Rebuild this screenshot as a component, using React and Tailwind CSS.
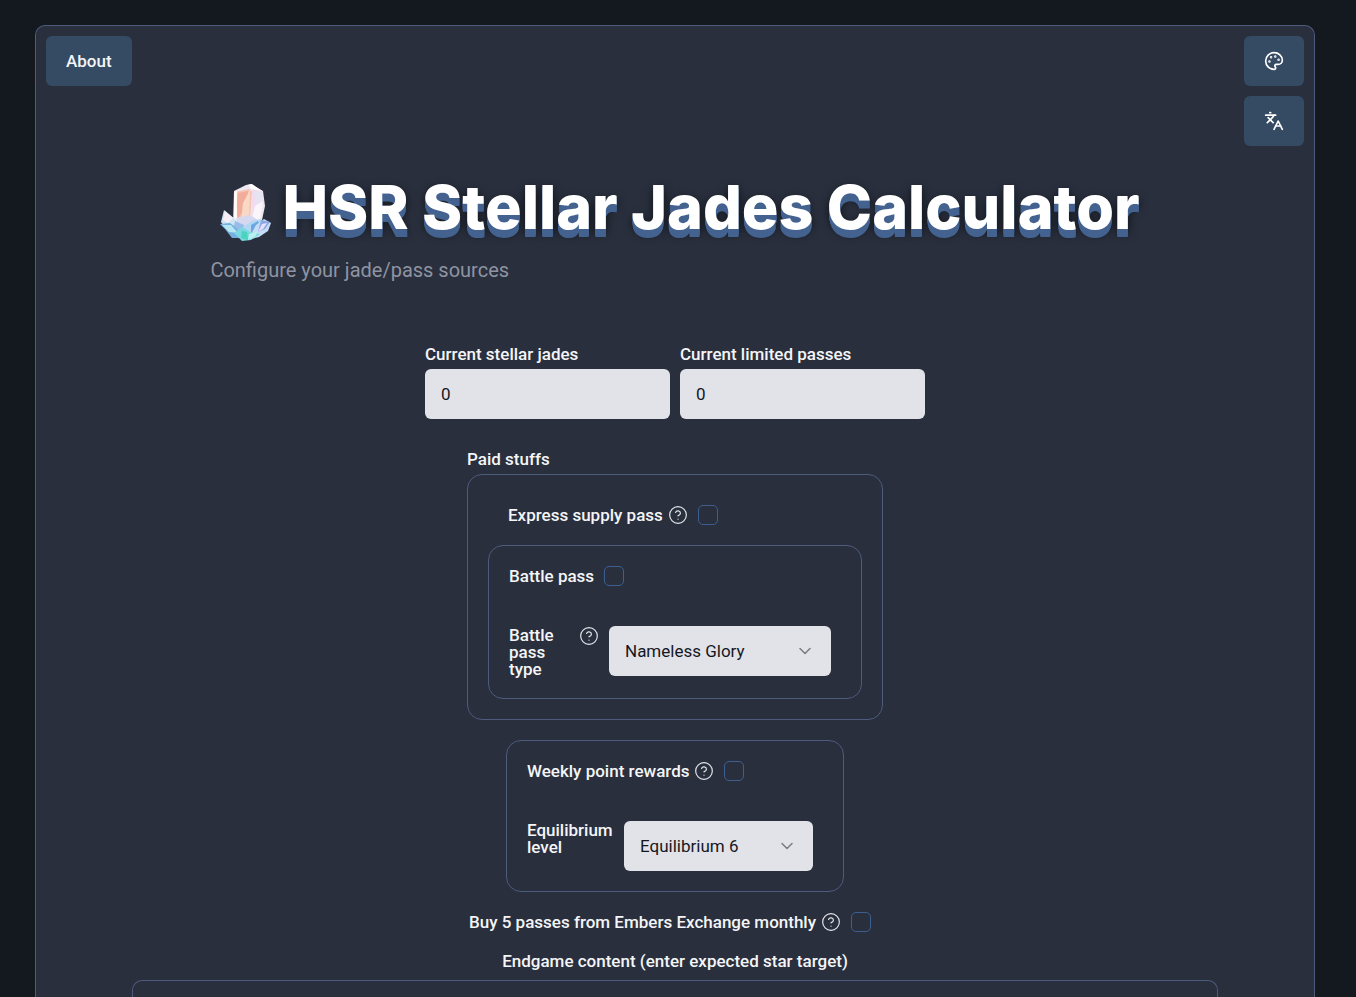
import { useState } from "react";
import { CircleHelp, ChevronDown, Languages, Palette } from "lucide-react";

function Crystal() {
  return (
    <svg viewBox="0 0 52 60" className="h-[60px] w-[52px] shrink-0" aria-hidden="true">
      <path d="M13 41 14 9l12-6 5-1 12 7 2 15-3 14-2 10-14 6z" fill="#eee8f2" />
      <path d="M15 10 29 7l3 3-2 28-13 1z" fill="#f6c4b2" />
      <path d="M18 11l10-2-1 14-9 14-2-8z" fill="#f1ad99" />
      <path d="M30 8l-1 25-8 6 2-18z" fill="#f9d9c6" />
      <path d="M32 8l9 0 3 12-9 8-4 8z" fill="#f0dcef" />
      <path d="M32 7l-4-4 4-1 10 7z" fill="#fff" />
      <path d="M34 10l8-1 1 9-7 5z" fill="#e6e4f2" />
      <path d="M14 11l3-3v30l-3 2z" fill="#fffaf5" />
      <path d="M35 24l8-5-3 18-9 4z" fill="#fbf5fa" />
      <path d="M16 36l14-3 8 5-2 9-17 2z" fill="#d5d8ef" />
      <path d="M1 40 4 28l11 9 9 11-6 8-9-5z" fill="#cde5f3" />
      <path d="M3 38l2-9 8 7-5 5z" fill="#f7eff5" />
      <path d="M0 42l10-1 7 5 6 10-11 0-7-9z" fill="#75afe0" />
      <path d="M2 43l9 0 7 8-9-1z" fill="#b6e6f2" />
      <path d="M15 39l9 4-1 9-9-8z" fill="#97bce7" />
      <path d="M23 45l9-6 9-2 2 7-8 10-11 4z" fill="#b2d7f2" />
      <path d="M31 43l7-4 2 5-9 7z" fill="#6ca6e0" />
      <path d="M36 43l8-6 7 4-3 8-9 6-11 3z" fill="#c7ddf7" />
      <path d="M41 38l9 2-5 7-7 3z" fill="#8aa9e4" />
      <path d="M42 42l5-1-4 6-5 3z" fill="#e8e0fb" />
      <path d="M14 51l8-6 8 5 10 2-9 6-9 1z" fill="#79d8e0" />
      <path d="M22 49l5 1 1 8-7-2z" fill="#4cd3bf" />
      <path d="M29 52l9-3-3 6-7 3z" fill="#b6f1ef" />
    </svg>
  );
}

function Help({ label }) {
  return (
    <button type="button" aria-label={label} className="size-5 shrink-0 text-gray-200">
      <CircleHelp className="size-5" strokeWidth={1.4} />
    </button>
  );
}

function Check({ id }) {
  return (
    <input
      id={id}
      type="checkbox"
      className="size-5 shrink-0 appearance-none rounded-[5px] border border-[#3d5f8f] checked:bg-[#3d5f8f]"
    />
  );
}

function NumberField({ id, label }) {
  const [value, setValue] = useState("0");
  return (
    <div className="flex w-[245px] flex-col gap-1.5">
      <label htmlFor={id}>{label}</label>
      <input
        id={id}
        inputMode="numeric"
        value={value}
        onChange={(e) => setValue(e.target.value)}
        className="h-[50px] w-full rounded-md bg-[#e2e3e8] px-4 font-normal text-[#15171f]"
      />
    </div>
  );
}

function Select({ id, options, className }) {
  return (
    <div className={`grid shrink-0 items-center ${className}`}>
      <select
        id={id}
        className="col-start-1 row-start-1 h-[50px] w-full appearance-none rounded-md bg-[#e2e3e8] px-4 font-normal text-[#15171f]"
      >
        {options.map((o) => (
          <option key={o}>{o}</option>
        ))}
      </select>
      <ChevronDown
        className="pointer-events-none col-start-1 row-start-1 mr-4 size-5 justify-self-end text-[#7b7c82]"
        strokeWidth={1.8}
      />
    </div>
  );
}

const iconButton =
  "flex h-[50px] w-[60px] items-center justify-center rounded-md bg-[#354a63] text-white";

export default function App() {
  return (
    <div className="min-h-screen bg-[#14181f] pt-[25px] pr-[41px] pl-[35px] font-['Roboto',sans-serif] text-[17px] leading-[17px] font-medium text-[#f4f5f7]">
      <main className="mx-auto h-[calc(100vh-25px)] max-w-[1280px] overflow-hidden rounded-t-[10px] border border-b-0 border-[#4d5b7c] bg-[#292f3d]">
        <div className="flex items-start justify-between p-2.5">
          <button type="button" className="h-[50px] rounded-md bg-[#354a63] px-5">
            About
          </button>
          <div className="flex flex-col gap-2.5">
            <button type="button" aria-label="Theme" className={iconButton}>
              <Palette className="size-5" />
            </button>
            <button type="button" aria-label="Language" className={iconButton}>
              <Languages className="size-5" />
            </button>
          </div>
        </div>

        <header className="mx-auto flex w-fit flex-col pt-5">
          <div className="flex items-center gap-2.5 pl-2.5">
            <Crystal />
            <h1 className="pb-2.5 font-['Inter',sans-serif] text-[61px] leading-[62px] font-extrabold whitespace-nowrap text-white [text-shadow:0_8px_0_#43628f,0_7px_0_#43628f,0_6px_0_#43628f,0_5px_0_#43628f,0_4px_0_#43628f,0_3px_0_#43628f,0_2px_0_#43628f,0_4px_10px_#000000b0]">
              HSR Stellar Jades Calculator
            </h1>
          </div>
          <p className="pt-2 text-xl leading-7 font-normal text-[#8f94a2]">
            Configure your jade/pass sources
          </p>
        </header>

        <form className="flex flex-col items-center pt-[62px]">
          <div className="flex gap-2.5">
            <NumberField id="jades" label="Current stellar jades" />
            <NumberField id="passes" label="Current limited passes" />
          </div>

          <section className="flex w-[416px] flex-col gap-1.5 pt-8">
            <h2>Paid stuffs</h2>
            <div className="flex flex-col gap-5 rounded-[15px] border border-[#4d5b7c] p-5">
              <div className="flex items-center gap-2.5 px-5 pt-2.5">
                <div className="flex items-center gap-[5px]">
                  <label htmlFor="supply">Express supply pass</label>
                  <Help label="About express supply pass" />
                </div>
                <Check id="supply" />
              </div>
              <div className="flex flex-col gap-10 rounded-[15px] border border-[#4d5b7c] p-5">
                <div className="flex items-center gap-2.5">
                  <label htmlFor="battle">Battle pass</label>
                  <Check id="battle" />
                </div>
                <div className="flex items-start gap-2.5">
                  <div className="flex w-[90px] items-start justify-between">
                    <label htmlFor="battle-type" className="w-14 pt-px">
                      Battle pass type
                    </label>
                    <Help label="About battle pass type" />
                  </div>
                  <Select
                    id="battle-type"
                    className="w-[222px]"
                    options={["Nameless Glory", "Nameless Medal"]}
                  />
                </div>
              </div>
            </div>
          </section>

          <section className="mt-5 flex w-[338px] flex-col gap-10 rounded-[15px] border border-[#4d5b7c] p-5">
            <div className="flex items-center gap-2.5">
              <div className="flex items-center gap-[5px]">
                <label htmlFor="weekly">Weekly point rewards</label>
                <Help label="About weekly point rewards" />
              </div>
              <Check id="weekly" />
            </div>
            <div className="flex items-start gap-2.5">
              <label htmlFor="level" className="w-[87px] pt-px">
                Equilibrium level
              </label>
              <Select
                id="level"
                className="w-[189px]"
                options={["Equilibrium 6", "Equilibrium 5", "Equilibrium 4"]}
              />
            </div>
          </section>

          <div className="flex items-center gap-2.5 pt-5 pr-2.5">
            <div className="flex items-center gap-[5px]">
              <label htmlFor="embers">Buy 5 passes from Embers Exchange monthly</label>
              <Help label="About Embers Exchange" />
            </div>
            <Check id="embers" />
          </div>

          <section className="flex w-full flex-col items-center gap-2.5 px-24 pt-[21px]">
            <h2>Endgame content (enter expected star target)</h2>
            <div className="h-10 w-full rounded-t-[10px] border border-b-0 border-[#4d5b7c]" />
          </section>
        </form>
      </main>
    </div>
  );
}
